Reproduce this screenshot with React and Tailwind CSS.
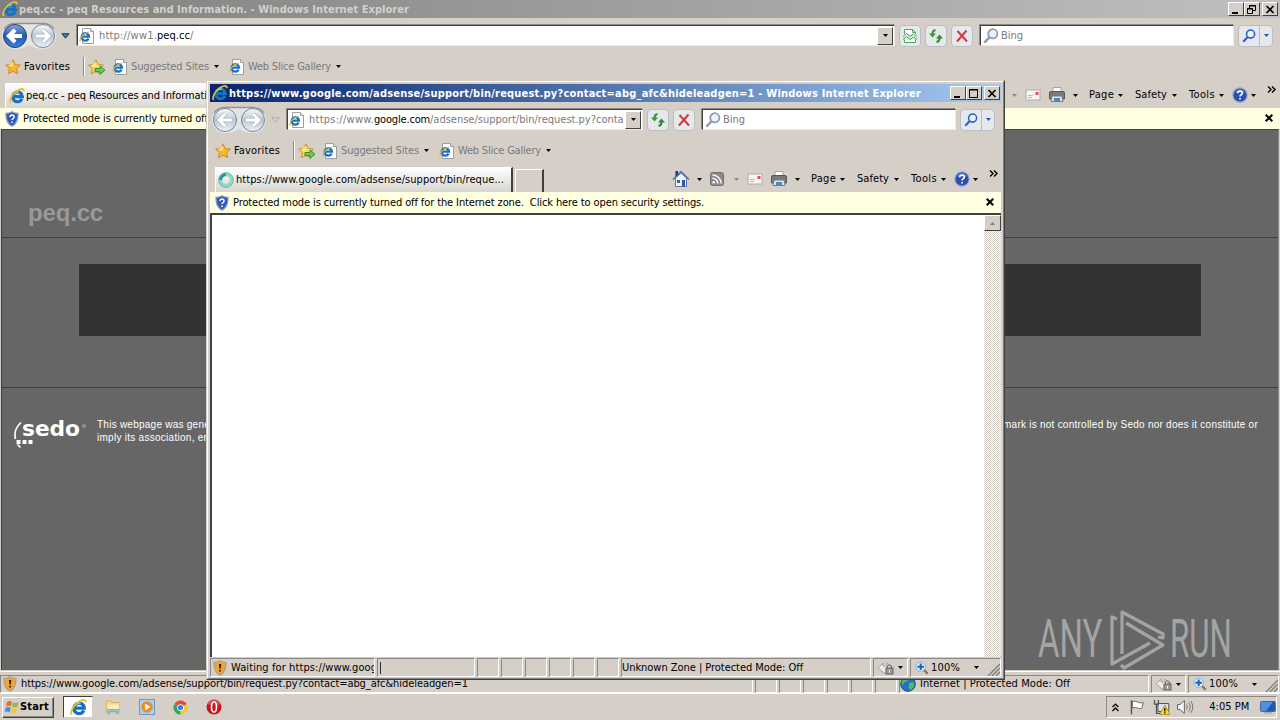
// src/App.jsx
import { useLayoutEffect, useRef, useState } from 'react';

// Spreads a line of text over a known width, so the labels keep the old Tahoma metrics
function Fit({ w, className = '', children }) {
  const ref = useRef(null);
  const [spacing, setSpacing] = useState(0);

  useLayoutEffect(() => {
    const el = ref.current;
    setSpacing((w - el.getBoundingClientRect().width) / el.textContent.length);
  }, [w]);

  return (
    <span ref={ref} className={`inline-block whitespace-pre shrink-0 ${className}`} style={{ letterSpacing: `${spacing}px` }}>
      {children}
    </span>
  );
}

function IeIcon({ className = 'w-4 h-4' }) {
  return (
    <svg viewBox="0 0 16 16" className={`shrink-0 ${className}`}>
      <path d="M13 10.8A4.900 4.900 0 1 1 13.400 8.600H5" fill="none" stroke="#1670c4" strokeWidth="3.100" />
      <path d="M4.600 6Q6.600 3.400 10 4.100" fill="none" stroke="#6cc6f6" strokeWidth="1.500" />
      <path d="M1.800 14.800C-.4 12.600 3 6.400 7.300 3.300S14.800 0 15 3.200" fill="none" stroke="#e9bf2c" strokeWidth="1.700" />
    </svg>
  );
}

function IePage({ className = '' }) {
  return (
    <svg viewBox="0 0 16 16" className={`w-4 h-4 shrink-0 ${className}`}>
      <path d="M3.500.5h8l3 3v12h-11z" fill="#fff" stroke="#9aa0a8" />
      <path d="M11.500.5v3h3" fill="#dde3ea" stroke="#9aa0a8" />
      <path d="M9.600 10.600A3.700 3.700 0 1 1 10 8.600H3.500" fill="none" stroke="#1b6fc0" strokeWidth="2.300" />
      <path d="M1.400 13.400C0 11.400 3 5.800 9.800 4" fill="none" stroke="#dcb838" strokeWidth="1.200" />
    </svg>
  );
}

function Caret({ className = '' }) {
  return (
    <svg viewBox="0 0 5 3" className={`w-[5px] h-[3px] shrink-0 ${className}`}>
      <path d="M0 0h5L2.500 3z" fill="currentColor" />
    </svg>
  );
}

function Star({ add }) {
  return (
    <svg viewBox="0 0 18 16" className="w-[18px] h-4 shrink-0">
      <path d="M8 .8l2.200 4.700 5.200.6-3.800 3.500 1 5.200L8 12.300l-4.600 2.500 1-5.200L.6 6.100l5.200-.6z" fill={add ? '#f8dc62' : '#fbb62c'} stroke="#c8871c" strokeWidth=".9" />
      <path d="M8 2.600v5L3 7z" fill="#ffe9a0" opacity=".8" />
      {add && <path d="M7 9.500h5V7l5 4.200-5 4.200v-2.700H7z" fill="#6ccb50" stroke="#2c8a2c" strokeWidth=".9" />}
    </svg>
  );
}

function Shield({ kind }) {
  const warn = kind === 'warn';
  return (
    <svg viewBox="0 0 16 16" className="w-4 h-4 shrink-0">
      <path d="M8 .8c2 1.200 4 1.600 6 1.600.2 6-1 10.200-6 12.900C3 12.600 1.800 8.400 2 2.400c2 0 4-.4 6-1.600z" fill={warn ? '#f0a52c' : '#2f59c4'} stroke={warn ? '#a9a397' : '#8c9ab4'} strokeWidth="1.300" />
      {warn ? (
        <path d="M7 4h2.200l-.4 4.500H7.400zM7.200 9.700h1.700v1.800H7.200z" fill="#2a1a04" />
      ) : (
        <path d="M5.900 6c0-2.700 4.400-2.500 4.200 0-.1 1.500-2 1.500-2 3.100M8.100 10.500v1.600" fill="none" stroke="#fff" strokeWidth="1.500" />
      )}
    </svg>
  );
}

function NavCircles({ active }) {
  return (
    <svg viewBox="0 0 56 30" className="w-14 h-[30px] shrink-0">
      <defs>
        <linearGradient id="navBlue" x1="0" y1="0" x2="0" y2="1">
          <stop offset="0" stopColor="#86a9dc" />
          <stop offset=".5" stopColor="#2458ae" />
          <stop offset="1" stopColor="#3b87d8" />
        </linearGradient>
        <linearGradient id="navPale" x1="0" y1="0" x2="0" y2="1">
          <stop offset="0" stopColor="#fafbfc" />
          <stop offset=".5" stopColor="#bac6d3" />
          <stop offset="1" stopColor="#eef4f9" />
        </linearGradient>
      </defs>
      <path d="M14 2h28a13 13 0 0 1 0 26q-8 0-14-4-6 4-14 4A13 13 0 0 1 14 2z" fill="#e6e4e3" />
      <path d="M3 8Q7 2.500 14 2.500h28q7 0 11 5.500" fill="none" stroke="#96928f" strokeWidth="1.300" />
      <circle cx="14" cy="15" r="11.500" fill={active ? 'url(#navBlue)' : 'url(#navPale)'} stroke={active ? '#243f72' : '#76869a'} />
      <circle cx="42" cy="15" r="11.500" fill="url(#navPale)" stroke="#76869a" />
      <path d="M21 15H8.500M14 9l-6 6 6 6" fill="none" stroke={active ? '#fff' : '#9dabba'} strokeWidth="4.200" />
      <path d="M21 15H8.500M14 9l-6 6 6 6" fill="none" stroke="#fff" strokeWidth="3" />
      <path d="M35 15h12.500M42 9l6 6-6 6" fill="none" stroke="#9dabba" strokeWidth="4.200" />
      <path d="M35 15h12.500M42 9l6 6-6 6" fill="none" stroke="#fff" strokeWidth="3" />
    </svg>
  );
}

function Magnifier({ color, className }) {
  return (
    <svg viewBox="0 0 16 16" className={`shrink-0 ${className}`}>
      <circle cx="9.800" cy="5.800" r="4.600" fill="#e8f3fc" stroke={color} strokeWidth="1.800" />
      <path d="M6.600 9.200L1.400 14.600" stroke={color} strokeWidth="2.400" />
    </svg>
  );
}

function ToolButton({ children, className = 'w-[22px]' }) {
  return (
    <div className={`h-[22px] shrink-0 rounded-sm border border-[#b9bdc4] bg-[#e7e8ec] flex items-center justify-center ${className}`}>
      {children}
    </div>
  );
}

function RefreshIcon() {
  return (
    <svg viewBox="0 0 16 16" className="w-4 h-4">
      <path d="M7.500 2Q4.500 2.500 4.500 6" fill="none" stroke="#2d9c38" strokeWidth="2" />
      <path d="M1 5.500h7L4.500 9.500z" fill="#2d9c38" />
      <path d="M8.500 14q3-.5 3-4" fill="none" stroke="#2d8c34" strokeWidth="2" />
      <path d="M8 10.500h7L11.500 6.500z" fill="#2d8c34" />
    </svg>
  );
}

function CompatIcon() {
  return (
    <svg viewBox="0 0 16 16" className="w-4 h-4">
      <path d="M2.500 6V1.500h8l3 3V6M2.500 11.500v3h11v-3" fill="#fff" stroke="#48a758" />
      <path d="M10.500 1.500v3h3" fill="none" stroke="#48a758" />
      <path d="M1 8.500l3.500-3 3.500 3 3.500-2.500L15 8.500M1 11.500l3.500-3 3.500 3 3.500-2.500 3.500 2.500" fill="none" stroke="#48a758" />
    </svg>
  );
}

function StopIcon() {
  return (
    <svg viewBox="0 0 16 16" className="w-4 h-4">
      <path d="M3.500 3l9.500 10.500M12.500 2.500L3 13.500" stroke="#cf3a3a" strokeWidth="2" />
    </svg>
  );
}

function WinButton({ kind }) {
  return (
    <div className="w-4 h-[14px] bg-[#d5cfc8] border border-t-white border-l-white border-r-[#404040] border-b-[#404040] flex items-center justify-center">
      <svg viewBox="0 0 12 11" className="w-3 h-[11px] shrink-0" fill="none" stroke="#000">
        {kind === 'min' && <path d="M2 9h6" strokeWidth="2" />}
        {kind === 'max' && <path d="M1.500 1.500h8v8h-8zM1 2h9" />}
        {kind === 'restore' && <path d="M3.500 4V1.500h6v5H7M3 2h7M1.500 4.500h5v5h-5zM1 5h6" />}
        {kind === 'close' && <path d="M2.500 2l7 7M9.500 2l-7 7" strokeWidth="1.700" />}
      </svg>
    </div>
  );
}

function TitleBar({ text, width, active, maximized }) {
  return (
    <div className={`h-[18px] flex items-center shrink-0 ${active ? 'bg-linear-to-r from-[#0a246a] to-[#a6caf0] pr-px' : 'bg-linear-to-r from-[#808080] to-[#c0c0c0] pr-0.5'}`}>
      <IeIcon className="w-4 h-4 ml-0.5 mr-px" />
      <Fit w={width} className={`font-bold pt-px ${active ? 'text-white' : 'text-[#d4d0c8]'}`}>{text}</Fit>
      <div className="ml-auto flex">
        <WinButton kind="min" />
        <WinButton kind={maximized ? 'restore' : 'max'} />
        <div className="w-0.5" />
        <WinButton kind="close" />
      </div>
    </div>
  );
}

function CommandBar() {
  return (
    <div className="ml-auto w-[329px] shrink-0 flex items-center h-[26px]">
      <svg viewBox="0 0 18 18" className="w-[18px] h-[18px]">
        <path d="M3.500 8v8.500h11V8L9 3z" fill="#eef4fc" stroke="#5f789f" />
        <path d="M1 9.500L9 1.800l8 7.700" fill="none" stroke="#5777ae" strokeWidth="1.700" />
        <path d="M3.500 1h2.500v3.500l-2.500 2z" fill="#242c8a" />
        <path d="M10 10h3v6.500h-3z" fill="#2a59a5" />
        <path d="M5 10h3v3H5z" fill="#4d5d80" />
      </svg>
      <div className="w-[18px] flex justify-center"><Caret /></div>
      <svg viewBox="0 0 18 18" className="w-[18px] h-[18px]">
        <rect x="2.500" y="2.500" width="13" height="13" rx="2" fill="#8b8b8b" stroke="#727272" />
        <circle cx="5.700" cy="12.300" r="1.300" fill="#fff" />
        <path d="M4.500 8.200a5.300 5.300 0 0 1 5.300 5.300M4.500 4.900a8.600 8.600 0 0 1 8.600 8.600" fill="none" stroke="#fff" strokeWidth="1.500" />
      </svg>
      <div className="w-5 flex justify-center text-[#8a8682]"><Caret /></div>
      <svg viewBox="0 0 18 14" className="w-[18px] h-[14px]">
        <rect x="2" y="2" width="14" height="10" fill="#f7f5f4" stroke="#b3adaa" />
        <path d="M4 7.500h5M4 9.500h4" stroke="#b5bac4" />
        <path d="M11.500 4h3v3h-3z" fill="#d6505c" />
      </svg>
      <svg viewBox="0 0 18 18" className="w-[18px] h-[18px] ml-1.5">
        <path d="M5 1.500h8V7H5z" fill="#fff" stroke="#a5a5a5" />
        <path d="M1.500 7q0-1.500 1.500-1.500h12q1.500 0 1.500 1.500v6h-15z" fill="#77797d" stroke="#56585c" />
        <path d="M4 10h10l1 5.500H3z" fill="#dfe4ea" stroke="#777c84" />
        <path d="M6 12h6v3.500H6z" fill="#4a88b5" />
      </svg>
      <div className="w-[18px] flex justify-center"><Caret /></div>
      <Fit w={25} className="ml-[5px]">Page</Fit>
      <div className="w-3 flex justify-center"><Caret /></div>
      <Fit w={32} className="ml-[9px]">Safety</Fit>
      <div className="w-3.5 flex justify-center"><Caret /></div>
      <Fit w={26} className="ml-2">Tools</Fit>
      <div className="w-3 flex justify-center"><Caret /></div>
      <svg viewBox="0 0 16 16" className="w-4 h-4 ml-[5px]">
        <circle cx="8" cy="8" r="7.200" fill="#2950b0" stroke="#9caacb" strokeWidth="1.200" />
        <path d="M3 5.500a5.600 5.600 0 0 1 10 0z" fill="#7d9be0" opacity=".7" />
        <path d="M5.600 6.200c0-3 4.900-2.700 4.700 0C10.200 7.900 8 7.900 8 9.500M8 10.900v1.700" fill="none" stroke="#fff" strokeWidth="1.700" />
      </svg>
      <div className="w-2.5 flex justify-center"><Caret /></div>
      <svg viewBox="0 0 9 7" className="w-[9px] h-[7px] ml-[9px] mb-3" fill="none" stroke="#000" strokeWidth="1.400">
        <path d="M1 .5l3 3-3 3M5 .5l3 3-3 3" />
      </svg>
    </div>
  );
}

// Everything above the page: title, address, favorites, tabs and the yellow information bar
function BrowserTop({ title, titleWidth, active, maximized, address, tab, loading }) {
  return (
    <div className="flex flex-col shrink-0">
      <TitleBar text={title} width={titleWidth} active={active} maximized={maximized} />
      <div className={`h-[35px] flex items-center ${maximized ? 'pr-[7px]' : 'pr-1.5'}`}>
        <div className="ml-px"><NavCircles active={maximized} /></div>
        <svg viewBox="0 0 9 6" className="w-[9px] h-1.5 ml-1 mr-[7px] shrink-0">
          <path d="M.8.700h7.400L4.500 5.200z" fill={maximized ? '#3a7ab5' : '#d4d0c8'} stroke={maximized ? '#23415f' : '#b0aba5'} />
        </svg>
        <div className="flex-1 min-w-0 h-[21px] bg-white border border-t-[#404040] border-l-[#404040] border-r-[#ece9e4] border-b-[#ece9e4] shadow-[-1px_-1px_0_#8c8984] flex items-center">
          <IePage className="ml-px mr-1" />
          <div className="flex-1 min-w-0 mr-0.5 overflow-hidden text-[#7a7a7a] flex">{address}</div>
          <div className="w-4 h-[18px] mr-px bg-[#d5cfc8] border border-t-white border-l-white border-r-[#404040] border-b-[#404040] flex items-center justify-center">
            <Caret className="w-[7px] h-1" />
          </div>
        </div>
        <div className="flex gap-1 ml-1 mr-[7px]">
          {maximized && <ToolButton><CompatIcon /></ToolButton>}
          <ToolButton><RefreshIcon /></ToolButton>
          <ToolButton><StopIcon /></ToolButton>
        </div>
        <div className="w-[254px] h-[21px] bg-white border border-t-[#404040] border-l-[#404040] border-r-[#ece9e4] border-b-[#ece9e4] shadow-[-1px_-1px_0_#8c8984] flex items-center shrink-0">
          <Magnifier color="#8f9cab" className="w-4 h-4 ml-0.5 mr-0.5" />
          <Fit w={22} className="text-[#7a7a7a]">Bing</Fit>
        </div>
        <ToolButton className="w-[22px] ml-1 rounded-r-none"><Magnifier color="#2b61cf" className="w-3.5 h-3.5" /></ToolButton>
        <ToolButton className="w-[14px] -ml-px rounded-l-none text-[#2558a8]"><Caret /></ToolButton>
      </div>
      <div className="h-[27px] flex items-center">
        <div className="ml-[5px]"><Star /></div>
        <Fit w={46} className="ml-px">Favorites</Fit>
        <div className="ml-[13px] w-0.5 h-[19px] border-l border-[#8b8884] bg-white" />
        <div className="ml-[3px]"><Star add /></div>
        <IePage className="ml-1.5" />
        <Fit w={78} className="ml-[3px] text-[#7a7a7a]">Suggested Sites</Fit>
        <Caret className="ml-[5px]" />
        <IePage className="ml-2.5" />
        <Fit w={83} className="ml-[3px] text-[#7a7a7a]">Web Slice Gallery</Fit>
        <Caret className="ml-[5px]" />
      </div>
      <div className={`h-7 flex items-end ${maximized ? 'pr-px' : ''}`}>
        <div className="ml-[5px] w-[298px] h-[25px] bg-linear-to-b from-white to-[#d8d5ce] border-t border-l border-white border-r-2 border-r-[#404040] flex items-center overflow-hidden shrink-0">
          {loading ? (
            <svg viewBox="0 0 16 16" className="w-4 h-4 ml-0.5 mr-0.5 shrink-0">
              <circle cx="8" cy="8" r="5.500" fill="none" stroke="#8adacd" strokeWidth="3.500" />
              <path d="M8 2.500A5.500 5.500 0 0 0 2.500 8" fill="none" stroke="#2c9992" strokeWidth="3" />
              <circle cx="8" cy="8" r="7.400" fill="none" stroke="#5faaa7" strokeWidth=".8" />
            </svg>
          ) : (
            <IeIcon className="w-4 h-4 ml-[3px] mr-px" />
          )}
          {tab}
        </div>
        <div className="ml-0.5 w-[29px] h-[23px] border-t border-l border-white border-r-2 border-r-[#404040] shrink-0" />
        <CommandBar />
      </div>
      <div className="h-[21px] bg-[#ffffe1] flex items-center">
        <div className="ml-1 mr-[3px]"><Shield /></div>
        <Fit w={471} className="pt-px">Protected mode is currently turned off for the Internet zone.  Click here to open security settings.</Fit>
        <svg viewBox="0 0 8 8" className="w-2 h-2 ml-auto mr-[7px] mb-px" stroke="#000" strokeWidth="2">
          <path d="M.7.700l6.600 6.600M7.300.700L.7 7.300" />
        </svg>
      </div>
    </div>
  );
}

function Cell({ className = '', children }) {
  return (
    <div className={`h-full border border-t-[#8b8884] border-l-[#8b8884] border-r-white border-b-white flex items-center overflow-hidden shrink-0 ${className}`}>
      {children}
    </div>
  );
}

function StatusEnd({ zoomClass }) {
  return (
    <>
      <Cell className="w-[35px]">
        <svg viewBox="0 0 18 16" className="w-[18px] h-4 ml-[3px] shrink-0">
          <path d="M1 8l5-5v3h4V3l4 5-4 5H6v-1z" fill="#eceae7" stroke="#a6a29e" />
          <rect x="9" y="8" width="7" height="6" fill="#9c9a98" stroke="#65625f" />
          <path d="M10.500 8V6q2-2.500 4 0v2" fill="none" stroke="#65625f" />
          <path d="M12.500 10v2.500" stroke="#fff" />
        </svg>
        <Caret className="ml-[3px]" />
      </Cell>
      <Cell className={zoomClass}>
        <svg viewBox="0 0 16 16" className="w-3.5 h-3.5 ml-1 mr-0.5 shrink-0">
          <path d="M9.500 9.500l5 5" stroke="#9c6b43" strokeWidth="2.500" />
          <circle cx="6.500" cy="6.500" r="5.500" fill="#d6ebfb" stroke="#77aedb" />
          <path d="M6.500 2.800v7.400M2.800 6.500h7.400" stroke="#1d62b4" strokeWidth="2.200" />
        </svg>
        <Fit w={29}>100%</Fit>
        <Caret className="ml-[14px]" />
        <svg viewBox="0 0 13 13" className="w-[13px] h-[13px] ml-auto self-end shrink-0" stroke="#85817c" strokeWidth="1.500">
          <path d="M1 13L13 1M5 13l8-8M9 13l4-4" />
        </svg>
      </Cell>
    </>
  );
}

function SmallCells() {
  return [1, 2, 3, 4, 5, 6].map(n => <Cell key={n} className="w-[22px]" />);
}

function SedoPage() {
  return (
    <div className="flex-1 min-h-0 flex flex-col mx-px mb-px border-t border-l border-[#404040] border-r border-r-[#8b8884] bg-[#666] relative overflow-hidden">
      <div className="h-[108px] border-b border-[#404040] flex items-end pb-2.5 pl-[26px]">
        <Fit w={75} className="font-['Liberation_Sans',Arial,sans-serif] font-bold text-[24px] leading-7 text-[#999]">peq.cc</Fit>
      </div>
      <div className="h-[150px] border-b border-[#404040] px-[77px] pt-[26px]">
        <div className="h-[72px] bg-[#333]" />
      </div>
      <div className="flex pt-[30px] pl-[11px]">
        <svg viewBox="0 0 76 36" className="w-[76px] h-9 shrink-0">
          <path d="M8 4.500Q0 12 2.500 21" fill="none" stroke="#fff" strokeWidth="1.700" />
          <path d="M3.500 22h4v4h-4zM9.500 22h4v4h-4zM15.500 22h4v4h-4z" fill="#fff" />
          <path d="M4.500 26.500l3 3" stroke="#fff" strokeWidth="1.700" />
          <text x="9" y="17.500" textLength="58" lengthAdjust="spacingAndGlyphs" fontFamily="DejaVu Sans, sans-serif" fontWeight="bold" fontSize="21" fill="#fff">sedo</text>
          <circle cx="71" cy="8" r="1.800" fill="#8a8a8a" stroke="#999" strokeWidth=".7" />
        </svg>
        <div className="ml-2 text-[10px] leading-[13px] text-white font-['Liberation_Sans',Arial,sans-serif] flex flex-col items-start">
          <Fit w={1161}>This webpage was generated by the domain owner using Sedo Domain Parking. Disclaimer: Sedo maintains no relationship with third party advertisers. Reference to any specific service or trade mark is not controlled by Sedo nor does it constitute or</Fit>
          <Fit w={259}>imply its association, endorsement or recommendation.</Fit>
        </div>
      </div>
      {/* watermark */}
      <div className="absolute right-[46px] bottom-0 h-[62px] w-[194px] flex items-center text-[#a4a4a4] font-[Roboto,sans-serif] text-[53px] leading-none">
        <div className="w-[70px] shrink-0"><span className="inline-block origin-left scale-x-[0.62]">ANY</span></div>
        <svg viewBox="0 0 58 62" className="w-[58px] h-[62px] shrink-0" fill="none" stroke="currentColor" strokeWidth="3.200" strokeLinejoin="round">
          <path d="M9 11L4 9v47l38-21" />
          <path d="M14 46V4l41 22v4l-5-1" />
          <path d="M18 15l37 22-39 23-3-3" />
        </svg>
        <div className="ml-1 w-[60px] shrink-0"><span className="inline-block origin-left scale-x-[0.59]">RUN</span></div>
      </div>
    </div>
  );
}

function MainWindow() {
  return (
    <div className="flex-1 min-h-0 flex flex-col bg-[#d5cfc8]">
      <BrowserTop
        title="peq.cc - peq Resources and Information. - Windows Internet Explorer"
        titleWidth={390}
        maximized
        address={<><Fit w={58}>http://ww1.</Fit><Fit w={33} className="text-black">peq.cc</Fit><Fit w={4}>/</Fit></>}
        tab={<Fit w={196}>peq.cc - peq Resources and Information.</Fit>}
      />
      <SedoPage />
      <div className="h-[22px] border-t border-white pt-[3px] flex gap-0.5 shrink-0">
        <Cell className="w-[753px]">
          <div className="ml-px mr-[3px]"><Shield kind="warn" /></div>
          <Fit w={447}>https://www.google.com/adsense/support/bin/request.py?contact=abg_afc&hideleadgen=1</Fit>
        </Cell>
        <SmallCells />
        <Cell className="w-[250px]">
          <svg viewBox="0 0 16 16" className="w-4 h-4 mr-1 shrink-0">
            <circle cx="8" cy="8" r="7.300" fill="#2472c8" stroke="#174f8c" />
            <path d="M3 3q4-3 6-.5-1 3-4 3.500L2 9Q1 6 3 3zM9 7l5-1q1 5-3 8-3-1-2-4z" fill="#55bd4c" />
          </svg>
          <Fit w={150}>Internet | Protected Mode: Off</Fit>
        </Cell>
        <StatusEnd zoomClass="w-[91px]" />
      </div>
    </div>
  );
}

function PopupWindow() {
  return (
    <div className="absolute left-[206px] top-[80px] w-[799px] h-[600px] bg-[#d5cfc8] border border-l-[#d5cfc8] border-t-[#d5cfc8] border-r-[#404040] border-b-[#404040]">
      <div className="h-full border border-t-white border-l-white border-r-[#808080] border-b-[#808080] pt-0.5 px-0.5 pb-px flex flex-col">
        <BrowserTop
          title="https://www.google.com/adsense/support/bin/request.py?contact=abg_afc&hideleadgen=1 - Windows Internet Explorer"
          titleWidth={692}
          active
          loading
          address={<><Fit w={65}>https://www.</Fit><Fit w={56} className="text-black">google.com</Fit><Fit w={203}>/adsense/support/bin/request.py?contact</Fit></>}
          tab={<Fit w={268}>https://www.google.com/adsense/support/bin/reque...</Fit>}
        />
        <div className="flex-1 min-h-0 bg-white border-t-2 border-l-2 border-t-[#404040] border-l-[#404040] flex justify-end">
          <div className="w-[17px] bg-[repeating-conic-gradient(#d4d0c8_0_25%,#ffffff_0_50%)] bg-[length:2px_2px]">
            <div className="h-4 bg-[#d5cfc8] border border-t-white border-l-white border-r-[#404040] border-b-[#404040] flex items-center justify-center text-[#808080]">
              <Caret className="w-[7px] h-1 rotate-180" />
            </div>
          </div>
        </div>
        <div className="h-5 flex gap-0.5 pt-px shrink-0">
          <Cell className="w-[165px]">
            <div className="ml-px mr-[3px]"><Shield kind="warn" /></div>
            <Fit w={149}>Waiting for https://www.googl</Fit>
          </Cell>
          <Cell className="w-[98px]"><div className="ml-0.5 w-px h-3 bg-[#303030]" /></Cell>
          <SmallCells />
          <Cell className="w-[250px]"><Fit w={181}>Unknown Zone | Protected Mode: Off</Fit></Cell>
          <StatusEnd zoomClass="flex-1 min-w-0" />
        </div>
      </div>
    </div>
  );
}

function Taskbar() {
  return (
    <div className="h-[27px] bg-[#d5cfc8] border-t border-white flex items-center pl-0.5 pr-[3px] shrink-0">
      <div className="w-[52px] h-[21px] border border-t-white border-l-white border-r-[#404040] border-b-[#404040] shadow-[inset_-1px_-1px_0_#8b8884] flex items-center">
        <svg viewBox="0 0 16 16" className="w-4 h-4 ml-px shrink-0">
          <path d="M3 3q2.500-1.800 5-.2L7 7.500q-2.500-1.500-5 0z" fill="#ee6a2e" />
          <path d="M9 3.200q2.500 1.500 5.500-.2l-1.200 4.800q-2.500 1.500-5.200 0z" fill="#8bc03b" />
          <path d="M1.700 8.700q2.500-1.500 5 0l-1 4.500q-2.500-1.500-5 0z" fill="#3f8fd9" />
          <path d="M7.800 9q2.500 1.500 5.200 0l-1.200 4.500q-2.500 1.500-5 0z" fill="#f6c42e" />
        </svg>
        <Fit w={29} className="font-bold">Start</Fit>
      </div>
      <div className="ml-[9px] w-[30px] h-[22px] bg-white border border-t-[#404040] border-l-[#404040] border-r-[#d4d0c8] border-b-[#d4d0c8] flex items-center justify-center">
        <IeIcon className="w-[17px] h-[17px]" />
      </div>
      <svg viewBox="0 0 16 16" className="w-4 h-4 ml-3">
        <path d="M1 2h5l1 1.500h7V13H1z" fill="#f3d987" stroke="#d4b55c" />
        <path d="M3 5.500h11V10H3z" fill="#fbeeb4" />
        <path d="M2.500 14.500v-4h11v4h-2.200v-2H4.700v2z" fill="#8fcbea" stroke="#5fa3cb" strokeWidth=".7" />
      </svg>
      <svg viewBox="0 0 16 16" className="w-4 h-4 ml-[18px]">
        <rect x=".5" y=".5" width="15" height="15" fill="#a9d0ef" stroke="#5e9fd2" />
        <circle cx="8" cy="8" r="5.700" fill="#f08a24" />
        <path d="M6.200 4.700v6.600L11.500 8z" fill="#fff" />
      </svg>
      <svg viewBox="0 0 16 16" className="w-[15px] h-[15px] ml-[18px]">
        <path d="M8 8V.5A7.500 7.500 0 0 1 8 15.500z" fill="#f4c932" />
        <path d="M8 8l6.500-3.750A7.500 7.500 0 0 0 1.500 4.250z" fill="#de4a3c" />
        <path d="M8 8L1.500 4.250A7.500 7.500 0 0 0 8 15.500z" fill="#39a556" />
        <circle cx="8" cy="8" r="3.600" fill="#fff" />
        <circle cx="8" cy="8" r="2.800" fill="#3f80e4" />
      </svg>
      <svg viewBox="0 0 16 16" className="w-4 h-4 ml-[18px]">
        <circle cx="8" cy="8" r="7.500" fill="#c3191d" />
        <path d="M1.500 5a7 7 0 0 1 13 0q-6 3-13 0z" fill="#e8716c" opacity=".6" />
        <ellipse cx="8" cy="8" rx="2.500" ry="5" fill="#c3191d" stroke="#fff" strokeWidth="1.600" />
      </svg>
      <div className="ml-auto w-[171px] h-[22px] border border-t-[#8b8884] border-l-[#8b8884] border-r-white border-b-white flex items-center">
        <svg viewBox="0 0 7 9" className="w-[7px] h-[9px] ml-[5px]" fill="none" stroke="#000" strokeWidth="1.300">
          <path d="M.5 4l3-3 3 3M.5 8l3-3 3 3" />
        </svg>
        <svg viewBox="0 0 16 16" className="w-4 h-4 ml-2.5">
          <path d="M2.500 1v14.500" stroke="#5a5a5a" strokeWidth="1.500" />
          <path d="M3.500 2.500q3-1 5.500.5t5.500.5L13 9.500q-2.500.5-4.500-.5t-5 0z" fill="#fff" stroke="#6c6c6c" />
        </svg>
        <svg viewBox="0 0 18 16" className="w-[18px] h-4 ml-2">
          <path d="M5 4.500h11v8H5z" fill="#dfe6ee" stroke="#4e4e4e" />
          <path d="M1.500 1v4h4V1M3.500 5v9.500H8" fill="none" stroke="#4e4e4e" strokeWidth="1.200" />
          <path d="M12 6l5.300 9.500H6.700z" fill="#ffd92e" stroke="#9e841a" strokeWidth=".8" />
          <path d="M12 9v3.500M12 13.300v1.200" stroke="#000" strokeWidth="1.300" />
        </svg>
        <svg viewBox="0 0 18 16" className="w-[18px] h-4 ml-1.5">
          <path d="M1.500 5.500H4L8.500 1.500v13L4 10.500H1.500z" fill="#f4f4f4" stroke="#666" />
          <path d="M10.500 5.500q2 2.500 0 5M12.700 3.500q3.500 4.500 0 9M15 2q4 6 0 12" fill="none" stroke="#777" />
        </svg>
        <Fit w={40} className="ml-[15px]">4:05 PM</Fit>
        <svg viewBox="0 0 16 14" className="w-4 h-3.5 ml-[11px]">
          <rect x=".5" y="1.500" width="15" height="10" rx="1" fill="#1c5ab8" stroke="#46628c" />
          <path d="M1 2h12L6 11H1z" fill="#4f90e0" />
          <path d="M4 13h8" stroke="#8896a8" />
        </svg>
      </div>
    </div>
  );
}

export default function App() {
  return (
    <div className="relative w-[1280px] h-[720px] overflow-hidden flex flex-col bg-[#d5cfc8] text-black text-[11px] leading-[14px] font-['DejaVu_Sans_Condensed','DejaVu_Sans',sans-serif]">
      <MainWindow />
      <Taskbar />
      <PopupWindow />
    </div>
  );
}
